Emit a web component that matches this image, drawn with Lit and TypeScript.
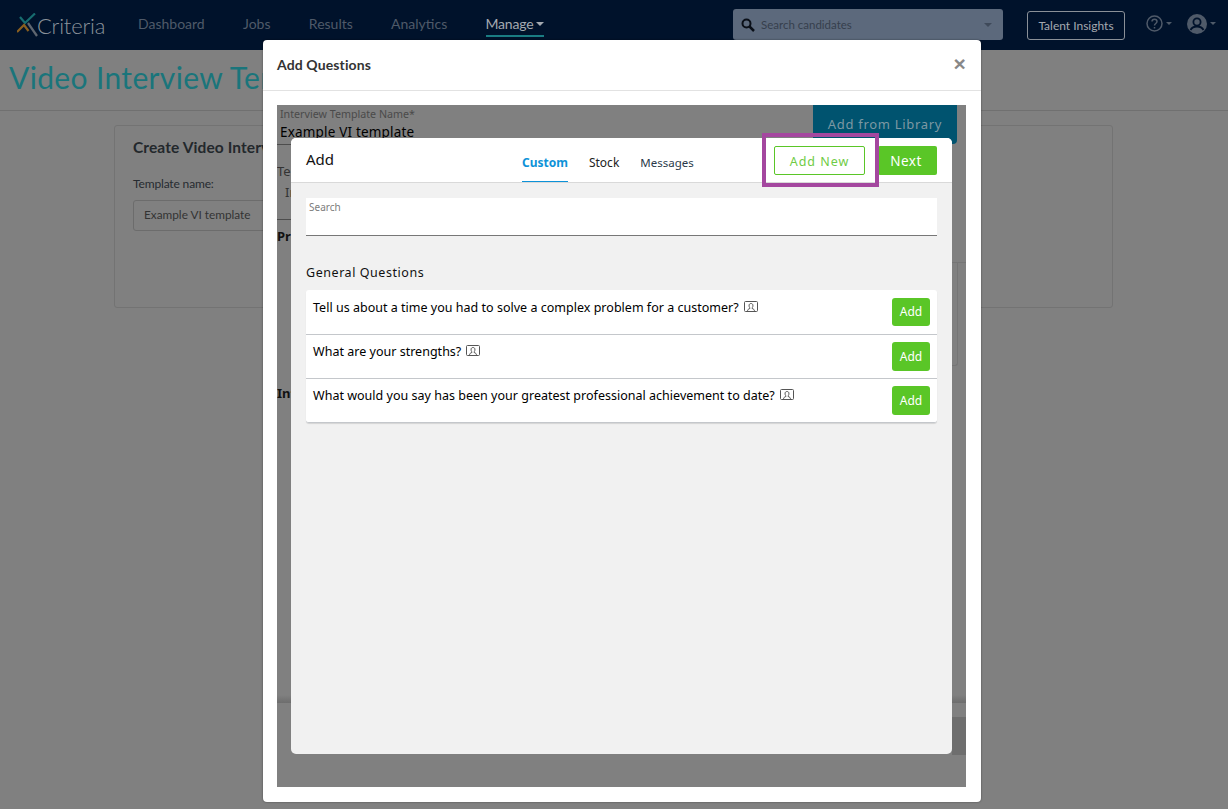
import { LitElement, html, css, svg } from "lit";
import { customElement } from "lit/decorators.js";

const personIcon = svg`<svg class="pi" width="14" height="11" viewBox="0 0 14 11" fill="none" stroke="#555" stroke-width="1"><rect x=".5" y=".5" width="13" height="10" rx="1"/><path d="M3.500 10.500c0-2 1-2.600 2.400-3 .1-.5-.1-.8-.4-1.200-.4-.6-.5-1.300-.4-2.200C5.300 3 6 2.500 7 2.500s1.700.5 1.900 1.600c.1.900 0 1.600-.4 2.200-.3.400-.5.700-.4 1.200 1.400.4 2.400 1 2.400 3"/></svg>`;

@customElement("app-root")
export class AppRoot extends LitElement {
  static styles = css`
    :host { display: block; position: relative; width: 1228px; height: 809px; overflow: hidden; background: #808080; font-family: "Lato", sans-serif; }
    * { box-sizing: border-box; }
    .nav { height: 50px; background: #00122b; display: flex; align-items: center; padding-right: 12px; }
    .logo { display: flex; align-items: center; margin-left: 17px; width: 121px; }
    .logo span { font-size: 22px; font-weight: 300; color: #8b929b; margin-left: -1px; letter-spacing: -.2px; font-family: "Lato", sans-serif; }
    .links { display: flex; gap: 38.300px; font-size: 14px; color: #4f5a69; align-self: flex-start; margin-top: 14px; }
    .links a { line-height: 20px; }
    .links .on { color: #a4a9b0; border-bottom: 2px solid #1a7c82; padding-bottom: 1px; display: flex; align-items: center; gap: 3px; height: 23px; letter-spacing: -.2px; }
    .caret { width: 0; height: 0; border-left: 4px solid transparent; border-right: 4px solid transparent; border-top: 4px solid currentColor; display: inline-block; }
    .search { margin-left: auto; width: 270px; height: 31px; background: #5c697c; border-radius: 3px; display: flex; align-items: center; padding: 0 11px 0 8px; font-size: 11.500px; color: #363f4d; gap: 6px; margin-top: -1px; }
    .search span { flex: 1; }
    .search .caret { color: #3f4a5a; }
    .talent { margin-left: 24px; width: 98px; height: 29px; border: 1px solid #8a9098; border-radius: 3px; color: #a4a9b0; font-size: 12px; display: flex; align-items: center; justify-content: center; margin-top: 1px; }
    .nav-icons { display: flex; align-items: center; margin-left: 21px; color: #4f5a69; gap: 3px; margin-top: -3px; }
    .nav-icons .caret { border-left-width: 3px; border-right-width: 3px; border-top-width: 3px; }
    .nav-icons svg + .caret + svg { margin-left: 12px; }

    .title { height: 61px; border-bottom: 1px solid #707070; padding: 10px 0 0 9px; font-size: 30px; line-height: 35px; color: #1a757b; letter-spacing: .35px; white-space: nowrap; }
    .card { margin: 14px 0 0 114px; width: 999px; height: 183px; border: 1px solid #737373; border-radius: 3px; padding: 11px 18px; color: #262b30; }
    .card h2 { margin: 0; font-size: 15.500px; line-height: 20px; font-weight: 700; color: #23282c; letter-spacing: .1px; }
    .card label { display: block; margin-top: 19px; font-size: 12px; line-height: 16px; letter-spacing: -.15px; }
    .card .inp { margin-top: 8px; width: 400px; height: 31px; border: 1px solid #6c6c6c; border-radius: 3px; padding-left: 10px; font-size: 11.800px; line-height: 28px; color: #333; }

    .modal { position: absolute; left: 263px; top: 40px; width: 718px; height: 762px; background: #fff; border-radius: 4px; box-shadow: 0 0 2px rgba(0,0,0,.5); display: flex; flex-direction: column; }
    .m-head { height: 51px; border-bottom: 1px solid #e2e2e2; display: flex; align-items: center; justify-content: space-between; padding: 0 15px 2px 14px; color: #333; font-size: 14px; font-weight: 700; flex: none; letter-spacing: .12px; }
    .close { font-size: 21px; font-weight: 700; color: #888; line-height: 20px; font-family: "Liberation Sans", sans-serif; }
    .m-body { position: relative; margin: 14px 15px 15px 14px; flex: 1; background: #808080; font-family: "Noto Sans", sans-serif; overflow: hidden; color: #000; }
    .under { display: flex; justify-content: space-between; padding-left: 3px; padding-right: 9px; }
    .under .lbl { font-size: 10.700px; line-height: 14px; margin-top: 2px; color: #4a4a4a; }
    .under .val { font-size: 13.500px; line-height: 20px; margin-top: 1px; letter-spacing: .18px; }
    .lib { width: 144px; height: 39px; background: #00536f; color: #7d98a3; border-radius: 0 0 4px 4px; font-size: 13px; letter-spacing: .7px; display: flex; align-items: center; justify-content: center; padding-bottom: 2px; }
    .u-line { position: absolute; left: 0; width: 14px; height: 1px; background: #4d4d4d; }
    .u-t { position: absolute; left: 0; font-size: 13px; line-height: 16px; color: #333; white-space: nowrap; }
    .u-t b { font-weight: 700; color: #111; }
    .u-card { position: absolute; right: 0; top: 157px; width: 14px; height: 103px; border-top: 1px solid #757575; }
    .u-card i { display: block; width: 6px; height: 103px; border-right: 1px solid #757575; border-bottom: 1px solid #757575; border-radius: 0 0 3px 0; }
    .u-band { position: absolute; left: 0; right: 0; top: 590px; height: 8px; background: linear-gradient(#808080, #6d6d6d); }
    .u-btn { position: absolute; right: 0; top: 612px; width: 14px; height: 38px; background: #6e6e6e; }

    .inner { position: absolute; left: 14px; top: 33px; width: 661px; height: 616px; background: #f1f1f1; border-radius: 5px; display: flex; flex-direction: column; overflow: hidden; }
    .i-head { height: 45px; background: #fff; border-bottom: 1px solid #d9d9d9; padding: 0 15px; flex: none; display: flex; }
    .i-title { font-size: 15px; line-height: 20px; margin-top: 11px; color: #111; width: 216px; }
    .tabs { display: flex; gap: 21px; font-size: 12px; color: #222; height: 44px; }
    .tabs a { line-height: 18px; padding-top: 16px; }
    .tabs .act { color: #0d92d8; font-weight: 700; border-bottom: 1px solid #0d92d8; }
    .tabs .last { font-size: 11.500px; color: #2a3a4a; }
    .acts { margin-left: auto; display: flex; gap: 13px; padding-top: 8px; }
    .btn { height: 29px; border-radius: 2px; display: flex; align-items: center; justify-content: center; padding-top: 1px; }
    .outline { width: 91px; border: 1px solid #5ac627; color: #6fcb45; background: #fff; letter-spacing: .95px; font-size: 12.500px; }
    .solid { width: 59px; background: #5ac627; color: #fff; font-size: 13.500px; letter-spacing: .5px; padding-right: 3px; }
    .i-body { padding: 15px 15px 0; }
    .s { height: 38px; background: #fff; border-bottom: 1px solid #777; padding: 2px 3px; font-size: 10px; line-height: 14px; color: #7c7c7c; }
    .gq { margin-top: 28px; font-size: 12.500px; line-height: 18px; color: #111; letter-spacing: .55px; }
    .rows { margin-top: 8px; border-radius: 3px; box-shadow: 0 1px 1px rgba(0,0,0,.12); }
    .row { height: 44px; background: #fff; border-bottom: 1px solid #c4c7cb; display: flex; justify-content: space-between; padding: 7px 7px 0; font-size: 12.500px; color: #000; }
    .row:first-child { height: 45px; padding-top: 8px; border-radius: 3px 3px 0 0; }
    .row:last-child { border-radius: 0 0 3px 3px; }
    .q { line-height: 19px; display: flex; gap: 5px; align-items: flex-start; letter-spacing: .015px; }
    .pi { margin-top: 3px; flex: none; }
    .add { width: 38px; height: 29px; background: #5ac627; color: #fff; border-radius: 3px; font-size: 12px; display: flex; align-items: center; justify-content: center; padding-bottom: 1px; }
    .row:first-child .add { height: 28px; }
    .mark { position: absolute; left: 762px; top: 133px; width: 117px; height: 54px; border: 4px solid #a4479f; }
  `;

  render() {
    const qs = [
      "Tell us about a time you had to solve a complex problem for a customer?",
      "What are your strengths?",
      "What would you say has been your greatest professional achievement to date?",
    ];
    return html`
      <header class="nav">
        <div class="logo">
          <svg width="21" height="24" viewBox="0 0 21 24" fill="none" stroke-width="2.200">
            <path d="M3 4l5 6L18 .5" stroke="#176d70"/>
            <path d="M0 19l7-7 4.500 6" stroke="#8a5f1f"/>
            <path d="M11 10l9 13" stroke="#5f6670"/>
          </svg>
          <span>Criteria</span>
        </div>
        <nav class="links">
          <a>Dashboard</a><a>Jobs</a><a>Results</a><a>Analytics</a>
          <a class="on">Manage<i class="caret"></i></a>
        </nav>
        <div class="search">
          <svg width="14" height="14" viewBox="0 0 14 14" fill="none" stroke="#0a0f18" stroke-width="2"><circle cx="5.500" cy="5.500" r="4"/><path d="M8.500 8.500L13 13" stroke-width="2.500"/></svg>
          <span>Search candidates</span><i class="caret"></i>
        </div>
        <div class="talent">Talent Insights</div>
        <div class="nav-icons">
          <svg width="17" height="17" viewBox="0 0 17 17" fill="none" stroke="currentColor" stroke-width="1.500"><circle cx="8.500" cy="8.500" r="7.500"/><path d="M6 6.500c0-3 5-3 5 0 0 2-2.500 2-2.500 4" /><path d="M8.500 12v1.500"/></svg>
          <i class="caret"></i>
          <svg width="20" height="20" viewBox="0 0 20 20"><circle cx="10" cy="10" r="10" fill="currentColor"/><circle cx="10" cy="8" r="3.600" fill="none" stroke="#00122b" stroke-width="1.800"/><path d="M3.500 16c1.500-3 3.500-3.500 6.500-3.500s5 .5 6.500 3.500" fill="none" stroke="#00122b" stroke-width="1.800"/></svg>
          <i class="caret"></i>
        </div>
      </header>
      <div class="title">Video Interview Template</div>
      <section class="card">
        <h2>Create Video Interview Template</h2>
        <label>Template name:</label>
        <div class="inp">Example VI template</div>
      </section>

      <div class="modal">
        <div class="m-head"><span>Add Questions</span><span class="close">×</span></div>
        <div class="m-body">
          <div class="under">
            <div>
              <div class="lbl">Interview Template Name*</div>
              <div class="val">Example VI template</div>
            </div>
            <div class="lib">Add from Library</div>
          </div>
          <div class="u-line" style="top:39px"></div>
          <div class="u-t" style="top:58px">Template</div>
          <div class="u-t" style="top:79px;left:8px">Interview</div>
          <div class="u-line" style="top:114px"></div>
          <div class="u-t" style="top:123px"><b>Pr</b></div>
          <div class="u-t" style="top:280px"><b>Int</b></div>
          <div class="u-card"><i></i></div>
          <div class="u-band"></div>
          <div class="u-btn"></div>

          <div class="inner">
            <div class="i-head">
              <div class="i-title">Add</div>
              <div class="tabs"><a class="act">Custom</a><a>Stock</a><a class="last">Messages</a></div>
              <div class="acts">
                <div class="btn outline">Add New</div>
                <div class="btn solid">Next</div>
              </div>
            </div>
            <div class="i-body">
              <div class="s">Search</div>
              <div class="gq">General Questions</div>
              <div class="rows">
                ${qs.map((q) => html`<div class="row"><div class="q"><span>${q}</span>${personIcon}</div><div class="add">Add</div></div>`)}
              </div>
            </div>
          </div>
        </div>
      </div>
      <div class="mark"></div>
    `;
  }
}
